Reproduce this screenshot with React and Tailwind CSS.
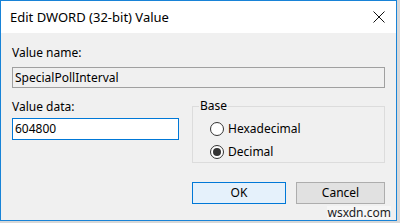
import React from 'react';

const font = { fontFamily: '"Noto Sans", "Segoe UI", sans-serif' };

function Radio({ checked, label }) {
  return (
    <div className="flex items-center h-[16px]">
      <span className="w-[14px] h-[14px] rounded-full border border-[#333333] bg-white flex items-center justify-center">
        {checked && <span className="w-[8px] h-[8px] rounded-full bg-[#333333]" />}
      </span>
      <span className="ml-[4px] text-[12px] text-black leading-[16px]">{label}</span>
    </div>
  );
}

export default function App() {
  return (
    <div className="w-[400px] h-[223px] bg-[#d8d8d8] overflow-hidden" style={font}>
      <div className="w-[397px] h-[221px] border border-[#1883d7] flex flex-col bg-[#f0f0f0]">
        {/* title bar */}
        <div className="h-[32px] bg-white flex items-center justify-between pl-[9px] pr-[10px]">
          <span className="text-[13px] text-black leading-[16px]">Edit DWORD (32-bit) Value</span>
          <svg width="12" height="12" viewBox="0 0 12 12" className="mr-[1px]">
            <path d="M0.5 0.5 L11.5 11.5 M11.5 0.5 L0.5 11.5" stroke="#111" strokeWidth="1" />
          </svg>
        </div>

        <div className="flex-1 px-[11px] pt-[12px] relative">
          <div className="text-[12px] leading-[16px] text-black">Value name:</div>
          <div className="mt-[6px] h-[21px] border border-[#a0a0a0] bg-[#f0f0f0] flex items-center px-[2px] text-[12px] text-black">
            SpecialPollInterval
          </div>

          <div className="flex mt-[11px]">
            <div className="w-[167px]">
              <div className="text-[12px] leading-[16px] text-black">Value data:</div>
              <div className="mt-[3px] h-[22px] border border-[#0078d7] bg-white flex items-center px-[2px] text-[12px] text-black">
                604800
              </div>
            </div>

            <div className="ml-[13px] flex-1 relative mt-[7px] h-[57px] border border-[#dcdcdc]">
              <span className="absolute left-[6px] top-[-9px] bg-[#f0f0f0] px-[1px] text-[12px] leading-[16px] text-black">Base</span>
              <div className="pl-[17px] pt-[14px] flex flex-col gap-[7px]">
                <Radio label="Hexadecimal" />
                <Radio checked label="Decimal" />
              </div>
            </div>
          </div>

          <div className="flex justify-end gap-[10px] mt-[19px]">
            <button className="w-[94px] h-[22px] border border-[#0078d7] bg-[#e5f1fb] text-[12px] text-black">OK</button>
            <button className="w-[89px] h-[22px] border border-[#adadad] bg-[#e1e1e1] text-[12px] text-black">Cancel</button>
          </div>

          <span className="absolute right-[5px] bottom-[1px] text-[12px] leading-[13px] text-[#222] bg-white/40">wsxdn.com</span>
        </div>
      </div>
    </div>
  );
}
